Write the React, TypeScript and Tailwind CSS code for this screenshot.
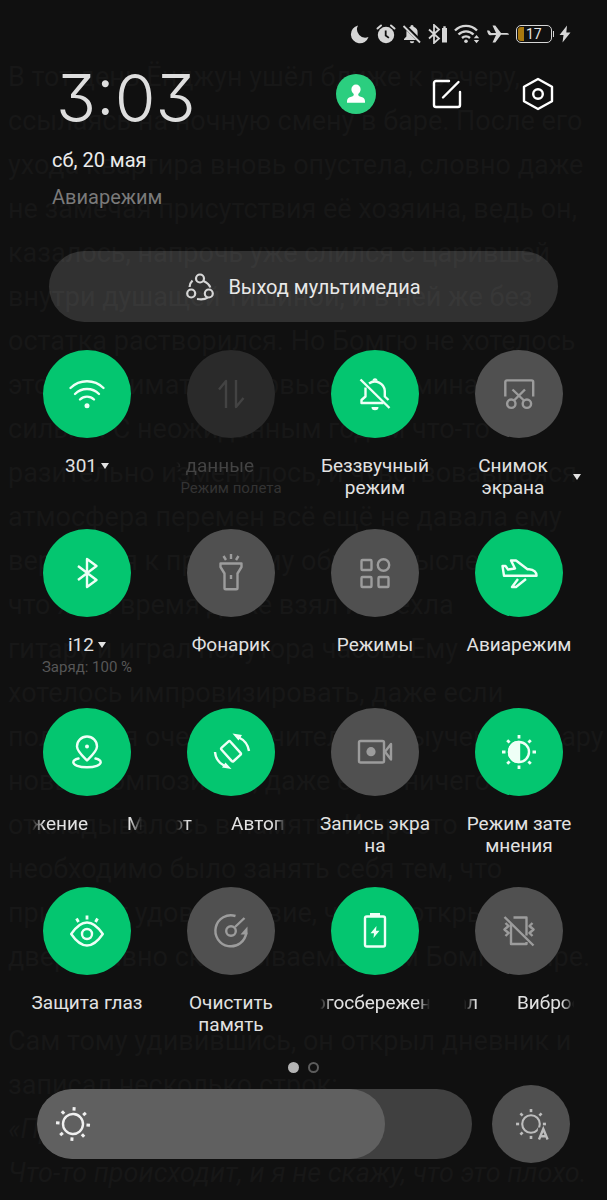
import { useState, type ReactNode } from "react";

const storyLines = [
  "В тот день Ёнджун ушёл ближе к вечеру,",
  "ссылаясь на ночную смену в баре. После его",
  "ухода квартира вновь опустела, словно даже",
  "не замечая присутствия её хозяина, ведь он,",
  "казалось, напрочь уже слился с царившей",
  "внутри душащей тишиной, и в ней же без",
  "остатка растворился. Но Бомгю не хотелось",
  "этого понимать, впервые воспоминания",
  "сильно. С неожиданным годом что-то",
  "разительно изменилось, и чувствовавшаяся",
  "атмосфера перемен всё ещё не давала ему",
  "вернуться к прежнему образу мыслей, так",
  "что хотя время даже взял из чехла",
  "гитару и играл полутора часов. Ему",
  "хотелось импровизировать, даже если",
  "получится очень значительно выученную пару",
  "новых композиций, даже если ничего",
  "откладывалось в память. И просто",
  "необходимо было занять себя тем, что",
  "приносит удовольствие, чтобы открыть",
  "дверь давно складываемым им Бомгю мире.",
];

function PageBehind() {
  return (
    <div
      aria-hidden="true"
      className="pointer-events-none absolute inset-0 overflow-hidden whitespace-nowrap pl-2 pt-[55px] text-[27px] leading-[44px] text-[#171717]"
    >
      {storyLines.map((line) => (
        <p key={line}>{line}</p>
      ))}
      <div className="mt-10">
        <p>Сам тому удивившись, он открыл дневник и</p>
        <p>записал несколько строк:</p>
        <p className="italic">«Привет.</p>
        <p className="italic">Что-то происходит, и я не скажу, что это плохо.</p>
      </div>
    </div>
  );
}

function StatusBar() {
  return (
    <div className="flex items-center justify-end gap-1.5 pr-9 pt-6 text-[#d6d6d6]">
      <svg viewBox="0 0 20 20" className="size-5" fill="currentColor">
        <path d="M8 1.5A9 9 0 1 0 18.5 13A8.3 8.3 0 0 1 8 1.5Z" />
      </svg>
      <svg viewBox="0 0 20 20" className="size-5">
        <circle cx="10" cy="11" r="8.2" fill="currentColor" />
        <path d="M1.5 4.5 5 1.5M18.5 4.5 15 1.5" stroke="currentColor" strokeWidth="2" strokeLinecap="round" />
        <path d="M9.7 6.5v5l3.2 2.4" fill="none" stroke="#101010" strokeWidth="1.8" />
      </svg>
      <svg viewBox="0 0 20 20" className="size-5">
        <path
          d="M10 1a1.6 1.6 0 0 1 1.6 1.7A5.8 5.8 0 0 1 15.6 8.5v4l2.4 2.5v1H2v-1l2.400-2.500v-4a5.800 5.800 0 0 1 4-5.800A1.600 1.600 0 0 1 10 1ZM7.800 17.300h4.400a2.200 2 0 0 1-4.400 0Z"
          fill="currentColor"
        />
        <path d="M2 1.200 19 18.200" stroke="#101010" strokeWidth="4" />
        <path d="M1.500 2 18 18.500" stroke="currentColor" strokeWidth="1.800" />
      </svg>
      <svg viewBox="0 0 20 20" className="size-5">
        <path d="M1 5.500 11 14.500 6 19V1l5 4.500L1 14.500" fill="none" stroke="currentColor" strokeWidth="1.800" />
        <path d="M14 4h1.300V2.300h2.400V4H19v14.500h-5Z" fill="currentColor" />
      </svg>
      <svg viewBox="0 0 26 20" className="h-5 w-[26px]" fill="none" stroke="currentColor" strokeWidth="2.400">
        <path d="M1 6.500a15.500 15.500 0 0 1 22 0M4.500 10.500a10.500 10.500 0 0 1 15 0M8 14a6 6 0 0 1 8 0" />
        <circle cx="12" cy="17.200" r="1.800" fill="currentColor" stroke="none" />
        <path d="m22.500 11 2.700 3.300h-5.400ZM22.500 19.200l2.700-3.300h-5.400Z" fill="currentColor" stroke="none" />
      </svg>
      <svg viewBox="0 0 24 20" className="h-5 w-6" fill="currentColor">
        <path d="M1 6.500h2.200L5 9h5L6.500 1.500h2.800L15 9h6a2 2 0 0 1 2 1.800H15L9.300 18.500H6.500L10 11 4 11.300Q2 11 1 6.500Z" />
      </svg>
      <span className="flex items-center gap-px">
        <span className="flex h-[18px] w-9 items-center gap-0.5 rounded-[5px] border border-[#d6d6d6] p-px">
          <span className="h-full w-[6px] rounded-l-[3px] bg-[#a9790f]" />
          <span className="text-[14px] leading-4 text-[#e4e4e4]">17</span>
        </span>
        <span className="h-[6px] w-px bg-[#d6d6d6]" />
        <svg viewBox="0 0 12 18" className="ml-1 h-[18px] w-3" fill="currentColor">
          <path d="M8 .500.500 10h4L3.500 17.500 11.500 7.500h-4.200Z" />
        </svg>
      </span>
    </div>
  );
}

function Header() {
  return (
    <header className="flex justify-between pl-[52px] pr-[49px] pt-[18px]">
      <div>
        <h1 className="pl-1 font-[Inter,sans-serif] text-[66px] font-light leading-[72px] text-[#dedede] [font-feature-settings:'cv09']">
          3:03
        </h1>
        <p className="mt-3 text-[20px] leading-7 text-[#ececec]">сб, 20 мая</p>
        <p className="mt-[9px] text-[20px] leading-7 text-[#7a7a7a]">Авиарежим</p>
      </div>
      <nav className="flex gap-[51px] self-start pt-3">
        <button aria-label="Профиль" className="grid size-10 place-items-center rounded-full bg-[#2bce7f]">
          <svg viewBox="0 0 20 20" className="size-5" fill="#fff">
            <path d="M10 .500a4.600 4.600 0 0 1 4.600 4.700c0 2.300-1 3.600-2.400 4.800 0 2 .800 2.300 3.300 2.900 2.200.600 3.500 1.800 3.500 4.300v1.600H1v-1.600c0-2.500 1.300-3.700 3.500-4.300C7 12.300 7.800 12 7.800 10 6.400 8.800 5.400 7.500 5.400 5.200A4.600 4.600 0 0 1 10 .500Z" />
          </svg>
        </button>
        <button aria-label="Изменить" className="grid size-10 place-items-center">
          <svg viewBox="0 0 30 30" className="size-[30px]" fill="none" stroke="#fff" strokeWidth="2.400" strokeLinecap="round">
            <path d="M17 2H4a2 2 0 0 0-2 2v22a2 2 0 0 0 2 2h22a2 2 0 0 0 2-2V13M11 18.500 26.500 3" />
          </svg>
        </button>
        <button aria-label="Настройки" className="grid size-10 place-items-center">
          <svg viewBox="0 0 32 34" className="h-[34px] w-8" fill="none" stroke="#fff" strokeWidth="2.400" strokeLinejoin="round">
            <path d="M16 2 30 9.700V24.300L16 32 2 24.300V9.700Z" />
            <circle cx="16" cy="17" r="4.800" />
          </svg>
        </button>
      </nav>
    </header>
  );
}

const icons = {
  wifi: (
    <>
      <path d="M-16.500-6a23.500 23.500 0 0 1 33 0M-12 0a17 17 0 0 1 24 0M-7 5.500a10 10 0 0 1 14 0" strokeLinecap="round" />
      <circle cy="11.700" r="2.500" fill="currentColor" stroke="none" />
    </>
  ),
  data: <path d="M-12-4.500-5-13V14M5-14V13L12.500 4" />,
  bellOff: (
    <>
      <path d="M-9.500-6.500V2.500L-13.500 6v3H8.500M-6-10.500A10 10 0 0 1 9.800-3V2.500L13.500 6" />
      <path d="M-2.500-13.200a2.500 2.500 0 0 1 5 0ZM-3.500 13a3.500 3.200 0 0 0 7 0Z" fill="currentColor" stroke="none" />
      <path d="M-14.500-14.500 14.500 14" />
    </>
  ),
  screenshot: (
    <>
      <path d="M-13.700 2.500V-12a1.600 1.600 0 0 1 1.600-1.600H12.600A1.600 1.600 0 0 1 14.200-12V2.500" />
      <path d="M-6.500-4.500 5 6.500M6-4.500-5 6.500" />
      <circle cx="-7.700" cy="9.700" r="4.200" />
      <circle cx="7.900" cy="9.700" r="4.200" />
    </>
  ),
  bluetooth: <path d="M-9-7 9.500 7 0 14V-14L9.500-7-9 7" />,
  torch: (
    <>
      <path d="M0-19v5M-7.500-17l2.500 4M7.500-17 5-13" />
      <path d="M-10.500-9.500h21V-6L6.500.500V15a1.300 1.300 0 0 1-1.300 1.300H-5.200A1.300 1.300 0 0 1-6.500 15V.500L-10.500-6ZM0 2v4" />
    </>
  ),
  modes: (
    <>
      <rect x="-13.500" y="-13" width="10" height="10" rx="1" />
      <rect x="-13.500" y="4" width="10" height="10" rx="1" />
      <rect x="3.500" y="4" width="10" height="10" rx="1" />
      <circle cx="8.500" cy="-8" r="5.700" />
    </>
  ),
  airplane: (
    <path d="M-16.500-7-15 2.800H17.500C17.800 0 15-3.800 10-3.800H8.500L-3-12.500H-8L-4-4.500-11-3.500-13.500-7ZM-1 6-7 14h4L7 6" />
  ),
  location: (
    <>
      <path d="M0 8.500C-5 3.500-10-1-10-5.500a10 10 0 0 1 20 0C10-1 5 3.500 0 8.500Z" />
      <circle cy="-5.500" r="2" fill="currentColor" stroke="none" />
      <path
        strokeLinecap="round"
        d="M-8.500 6.500C-12 7.300-13.700 8.700-13.700 10.300-13.700 13-8 15.200 0 15.200S13.700 13 13.700 10.300C13.700 8.700 12 7.300 8.500 6.500"
      />
    </>
  ),
  rotate: (
    <>
      <rect x="-5.500" y="-9.500" width="12" height="18" rx="1.500" transform="rotate(-42)" />
      <path d="M8-14.500A18 18 0 0 1 18-1M-16 0A17 17 0 0 0-7 13.500" />
      <path d="M1.500-18.500 11-17 7.500-11.500ZM.500 17-9 15.500-5.500 10.500Z" fill="currentColor" stroke="none" />
    </>
  ),
  record: (
    <>
      <rect x="-16" y="-11" width="25" height="21.500" rx="1.500" />
      <circle cx="-4" cy="-.300" r="4.600" fill="currentColor" stroke="none" />
      <path d="M10-.300 16-8V7.500Z" />
    </>
  ),
  darkMode: (
    <>
      <circle r="10" />
      <path d="M0-10a10 10 0 0 0 0 20Z" fill="currentColor" />
      <path
        strokeWidth="2.800"
        d="M0-17v3.500M0 17v-3.500M-17 0h3.500M17 0h-3.500M-11.800-11.800l2.400 2.400M11.800-11.800l-2.400 2.400M-11.800 11.800l2.400-2.400M11.800 11.800l-2.400-2.400"
      />
    </>
  ),
  eye: (
    <>
      <path d="M-15.800 3Q-8-8.500 0-8.500T15.800 3Q8 14.500 0 14.500T-15.800 3Z" />
      <circle cy="3" r="5" />
      <path strokeWidth="2.800" d="M0-15.500v4M-10.500-12.500l2 3.500M10.500-12.500l-2 3.500" />
    </>
  ),
  clean: (
    <>
      <path d="M4.500-15A15.500 15.500 0 1 0 15.300 1.500M4-4 13.500-13" />
      <circle r="4.800" />
      <path d="M16.500-4.500V3.500H9.500Z" fill="currentColor" stroke="none" />
    </>
  ),
  battery: (
    <>
      <rect x="-10" y="-14.500" width="20" height="30" rx="1.800" />
      <path d="M-5-18H5v3H-5ZM1.500-5-4.500 2.300h3.500L-1.500 7 4.500-.300H1Z" fill="currentColor" stroke="none" />
    </>
  ),
  vibrateOff: (
    <path d="M-5.500-13.500H7.500v18M-8-7V13H7.500V11M-13.500-8l3 3-4 3.500 4 3.500-3 3M13.500-8l-3 3 4 3.500-4 3.500 3 3M-14.500-14 14.500 14.500" />
  ),
} satisfies Record<string, ReactNode>;

type Tile = {
  name: string;
  icon: keyof typeof icons;
  state: "on" | "off" | "disabled";
  lines?: string[];
  /** Width that holds the end of the scrolling label's first copy. */
  scroll?: string;
  note?: string;
  menu?: "inline" | "side";
};

const tiles: Tile[] = [
  { name: "301", icon: "wifi", state: "on", menu: "inline" },
  { name: "Мобильные данные", icon: "data", state: "disabled", scroll: "w-[78px]", note: "Режим полета" },
  { name: "Беззвучный режим", icon: "bellOff", state: "on", lines: ["Беззвучный", "режим"] },
  { name: "Снимок экрана", icon: "screenshot", state: "off", lines: ["Снимок", "экрана"], menu: "side" },
  { name: "i12", icon: "bluetooth", state: "on", menu: "inline", note: "Заряд: 100 %" },
  { name: "Фонарик", icon: "torch", state: "off" },
  { name: "Режимы", icon: "modes", state: "off" },
  { name: "Авиарежим", icon: "airplane", state: "on" },
  { name: "Местоположение", icon: "location", state: "on", scroll: "w-14" },
  { name: "Автоповорот", icon: "rotate", state: "on", scroll: "w-4" },
  { name: "Запись экрана", icon: "record", state: "off", lines: ["Запись экра", "на"] },
  { name: "Режим затемнения", icon: "darkMode", state: "on", lines: ["Режим зате", "мнения"] },
  { name: "Защита глаз", icon: "eye", state: "on" },
  { name: "Очистить память", icon: "clean", state: "off", lines: ["Очистить", "память"] },
  { name: "Энергосбережение", icon: "battery", state: "on", scroll: "w-[132px]" },
  { name: "Вибросигнал", icon: "vibrateOff", state: "off", scroll: "w-3.5" },
];

const discStyle = {
  on: "bg-[#04c670] text-[#eefff6]",
  off: "bg-[#505050] text-[#9c9c9c]",
  disabled: "bg-[#2a2a2a] text-[#434343]",
};

function Caret() {
  return (
    <svg viewBox="0 0 8 6" className="h-[6px] w-2 shrink-0" fill="currentColor">
      <path d="M0 0h8L4 6Z" />
    </svg>
  );
}

function TileLabel({ tile }: { tile: Tile }) {
  if (tile.scroll) {
    return (
      <span className="flex w-[110px] gap-[39px] overflow-hidden whitespace-nowrap [mask-image:linear-gradient(to_right,transparent,black_12px,black_calc(100%-12px),transparent)]">
        <span className={`flex shrink-0 justify-end ${tile.scroll}`}>
          <span>{tile.name}</span>
        </span>
        <span aria-hidden="true">{tile.name}</span>
      </span>
    );
  }
  const text = (tile.lines ?? [tile.name]).map((line) => (
    <span key={line} className="block whitespace-nowrap">
      {line}
    </span>
  ));
  if (tile.menu === "side") {
    return (
      <span className="flex w-full items-center pl-1.5 pr-2.5">
        <span className="flex-1">{text}</span>
        <Caret />
      </span>
    );
  }
  return (
    <span className="flex items-center gap-1">
      <span>{text}</span>
      {tile.menu === "inline" && <Caret />}
    </span>
  );
}

function QuickTile({ tile }: { tile: Tile }) {
  const dim = tile.state === "disabled";
  return (
    <button
      type="button"
      disabled={dim}
      aria-label={tile.name}
      aria-pressed={tile.state === "on"}
      className="flex flex-col items-center text-center"
    >
      <span className={`grid size-[88px] place-items-center rounded-full ${discStyle[tile.state]}`}>
        <svg
          viewBox="-20 -20 40 40"
          className="size-10"
          fill="none"
          stroke="currentColor"
          strokeWidth="2.400"
          strokeLinejoin="round"
        >
          {icons[tile.icon]}
        </svg>
      </span>
      <span
        className={`mt-[17px] flex w-full flex-col items-center text-[19px] leading-[22px] ${dim ? "text-[#434343]" : "text-[#e2e2e2]"}`}
      >
        <TileLabel tile={tile} />
        {tile.note && (
          <span className={`text-[15px] leading-[22px] ${dim ? "text-[#333333]" : "text-[#565656]"}`}>{tile.note}</span>
        )}
      </span>
    </button>
  );
}

const rays = [0, 45, 90, 135, 180, 225, 270, 315];

function Sun({ turn = 0 }: { turn?: number }) {
  return (
    <g transform={`rotate(${turn})`}>
      <circle r="10" fill="none" stroke="currentColor" strokeWidth="2.400" />
      {rays.map((angle) => (
        <path key={angle} d="M0-17v3.500" stroke="currentColor" strokeWidth="3" transform={`rotate(${angle})`} />
      ))}
    </g>
  );
}

function Brightness() {
  const [level, setLevel] = useState(80);
  return (
    <section className="flex items-center gap-5 px-[37px] pb-9 pt-3">
      <label className="relative block h-[70px] flex-1 overflow-hidden rounded-full bg-[#404040] text-[#f0f0f0]">
        <span className="flex h-full items-center rounded-full bg-[#606060] pl-[18px]" style={{ width: `${level}%` }}>
          <svg viewBox="-18 -18 36 36" className="size-9 shrink-0">
            <Sun turn={4} />
          </svg>
        </span>
        <input
          type="range"
          min="0"
          max="100"
          value={level}
          onChange={(event) => setLevel(Number(event.target.value))}
          aria-label="Яркость"
          className="absolute inset-0 size-full cursor-pointer opacity-0"
        />
      </label>
      <button
        type="button"
        aria-label="Автояркость"
        className="grid size-[78px] shrink-0 place-items-center rounded-full bg-[#505050] text-[#bdbdbd]"
      >
        <svg viewBox="-20 -20 40 40" className="size-10">
          <g transform="scale(.88)">
            <Sun />
          </g>
          <path d="M7 3.500H19V18H6Z" fill="#505050" />
          <path d="M8 15.500 12.300 5 16.600 15.500M9.500 12.300h5.600" fill="none" stroke="currentColor" strokeWidth="2.400" />
        </svg>
      </button>
    </section>
  );
}

export default function App() {
  return (
    <main className="relative min-h-screen overflow-hidden bg-[#101010] font-[Roboto,'Noto_Sans',sans-serif]">
      <PageBehind />
      <div className="relative">
        <StatusBar />
        <Header />
        <div className="px-[49px] pt-10">
          <button
            type="button"
            className="flex h-[71px] w-full items-center justify-center gap-[14px] rounded-full bg-white/14 text-[20px] text-[#e8e8e8]"
          >
            <svg viewBox="0 0 28 28" className="size-7" fill="none" stroke="#d6d6d6" strokeWidth="2.200">
              <circle cx="14" cy="5.500" r="4" />
              <circle cx="5.200" cy="20.500" r="4" />
              <circle cx="22.800" cy="20.500" r="4" />
              <path d="M6.500 7.500Q3.500 10.500 3.600 14M17.500 8Q23 10.500 24.300 14.500M11 26Q18 27.200 21.500 24.700" />
            </svg>
            Выход мультимедиа
          </button>
        </div>
        <section className="grid grid-cols-4 gap-y-[30px] pl-[15px] pr-4 pt-7">
          {tiles.map((tile) => (
            <QuickTile key={tile.name} tile={tile} />
          ))}
        </section>
        <div className="flex justify-center gap-[9px] pt-[26px]">
          <span className="size-[11px] rounded-full bg-[#b4b4b4]" />
          <span className="size-[11px] rounded-full border-2 border-[#5c5c5c]" />
        </div>
        <Brightness />
      </div>
    </main>
  );
}
